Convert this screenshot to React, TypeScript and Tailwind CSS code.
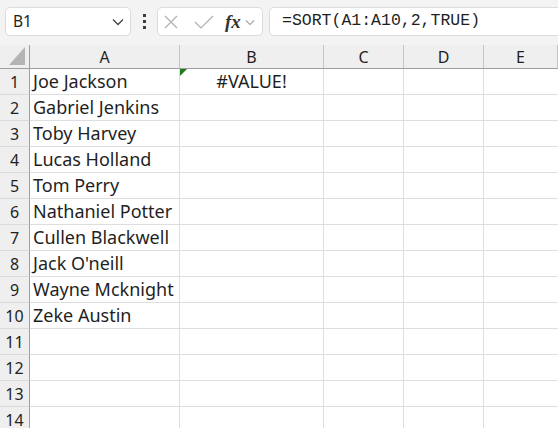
import React from 'react'

const names = [
  'Joe Jackson',
  'Gabriel Jenkins',
  'Toby Harvey',
  'Lucas Holland',
  'Tom Perry',
  'Nathaniel Potter',
  'Cullen Blackwell',
  "Jack O'neill",
  'Wayne Mcknight',
  'Zeke Austin',
]

const columns = ['A', 'B', 'C', 'D', 'E']
const rowCount = 14

function Chevron({ className }: { className?: string }) {
  return (
    <svg viewBox="0 0 12 8" className={className} fill="none" stroke="currentColor" strokeWidth="1.3">
      <path d="M1 1.5 L6 6.5 L11 1.5" />
    </svg>
  )
}

function FormulaBar() {
  return (
    <div className="flex h-[45px] items-start bg-[#f3f3f3] pl-[5px] pt-[7px]">
      {/* Name box */}
      <div className="flex h-[29px] w-[126px] items-center justify-between rounded-[5px] border border-[#dcdcdc] bg-white pl-[7px] pr-[6px]">
        <span className="text-[15.5px] text-[#1f1f1f]">B1</span>
        <Chevron className="h-[8px] w-[12px] text-[#444]" />
      </div>

      {/* Drag handle */}
      <div className="flex h-[29px] w-[26px] flex-col items-center justify-center gap-[3px]">
        <span className="h-[3px] w-[3px] bg-[#3c3c3c]" />
        <span className="h-[3px] w-[3px] bg-[#3c3c3c]" />
        <span className="h-[3px] w-[3px] bg-[#3c3c3c]" />
      </div>

      {/* Cancel / enter / insert function */}
      <div className="flex h-[29px] w-[106px] items-center rounded-[5px] border border-[#dcdcdc] bg-white pl-[6px]">
        <svg viewBox="0 0 14 14" className="h-[14px] w-[14px]" fill="none" stroke="#b0b0b0" strokeWidth="1.2">
          <path d="M1 1 L13 13 M13 1 L1 13" />
        </svg>
        <svg viewBox="0 0 20 14" className="ml-[16px] h-[14px] w-[20px]" fill="none" stroke="#b0b0b0" strokeWidth="1.2">
          <path d="M1 7 L7 13 L19 1" />
        </svg>
        <span className="ml-[11px] font-['Liberation_Serif',serif] text-[19px] font-bold italic leading-none text-[#333]">
          fx
        </span>
        <Chevron className="ml-[4px] mt-[2px] h-[7px] w-[10px] text-[#999]" />
      </div>

      {/* Formula input */}
      <div className="ml-[6px] mr-[-12px] flex h-[29px] flex-1 items-center rounded-[5px] border border-[#dcdcdc] bg-white pl-[12px]">
        <span className="font-['Liberation_Mono',monospace] text-[16.5px] text-[#1f1f1f]">=SORT(A1:A10,2,TRUE)</span>
      </div>
    </div>
  )
}

export default function App() {
  return (
    <div className="h-[428px] w-[558px] overflow-hidden bg-white font-['Noto_Sans',sans-serif] text-[#1f1f1f]">
      <FormulaBar />

      <div className="grid grid-cols-[30px_150px_144px_80px_80px_1fr] grid-rows-[24px] auto-rows-[26px] bg-white">
        {/* Select-all corner */}
        <div className="relative border-b border-r border-b-[#9e9e9e] border-r-[#9e9e9e] bg-[#efefef]">
          <svg viewBox="0 0 16 18" className="absolute bottom-[3px] right-[4px] h-[18px] w-[16px]">
            <polygon points="16,0 16,18 0,18" fill="#b4b4b4" />
          </svg>
        </div>
        {columns.map((col) => (
          <div
            key={col}
            className="flex items-center justify-center border-b border-r border-b-[#9e9e9e] border-r-[#c4c4c4] bg-[#efefef] pt-[1px] text-[16px]"
          >
            {col}
          </div>
        ))}

        {Array.from({ length: rowCount }, (_, i) => (
          <React.Fragment key={i}>
            <div className="flex items-center justify-center border-b border-r border-b-[#dadada] border-r-[#9e9e9e] bg-[#efefef] text-[16px]">
              {i + 1}
            </div>
            <div className="flex items-center whitespace-nowrap border-b border-r border-[#dedede] pl-[3px] text-[18px]">
              {names[i] ?? ''}
            </div>
            <div className="relative flex items-center justify-center border-b border-r border-[#dedede] text-[18px]">
              {i === 0 && (
                <>
                  <svg viewBox="0 0 7 7" className="absolute left-0 top-0 h-[7px] w-[7px]">
                    <polygon points="0,0 7,0 0,7" fill="#1e7b1e" />
                  </svg>
                  #VALUE!
                </>
              )}
            </div>
            <div className="border-b border-r border-[#dedede]" />
            <div className="border-b border-r border-[#dedede]" />
            <div className="border-b border-[#dedede]" />
          </React.Fragment>
        ))}
      </div>
    </div>
  )
}
